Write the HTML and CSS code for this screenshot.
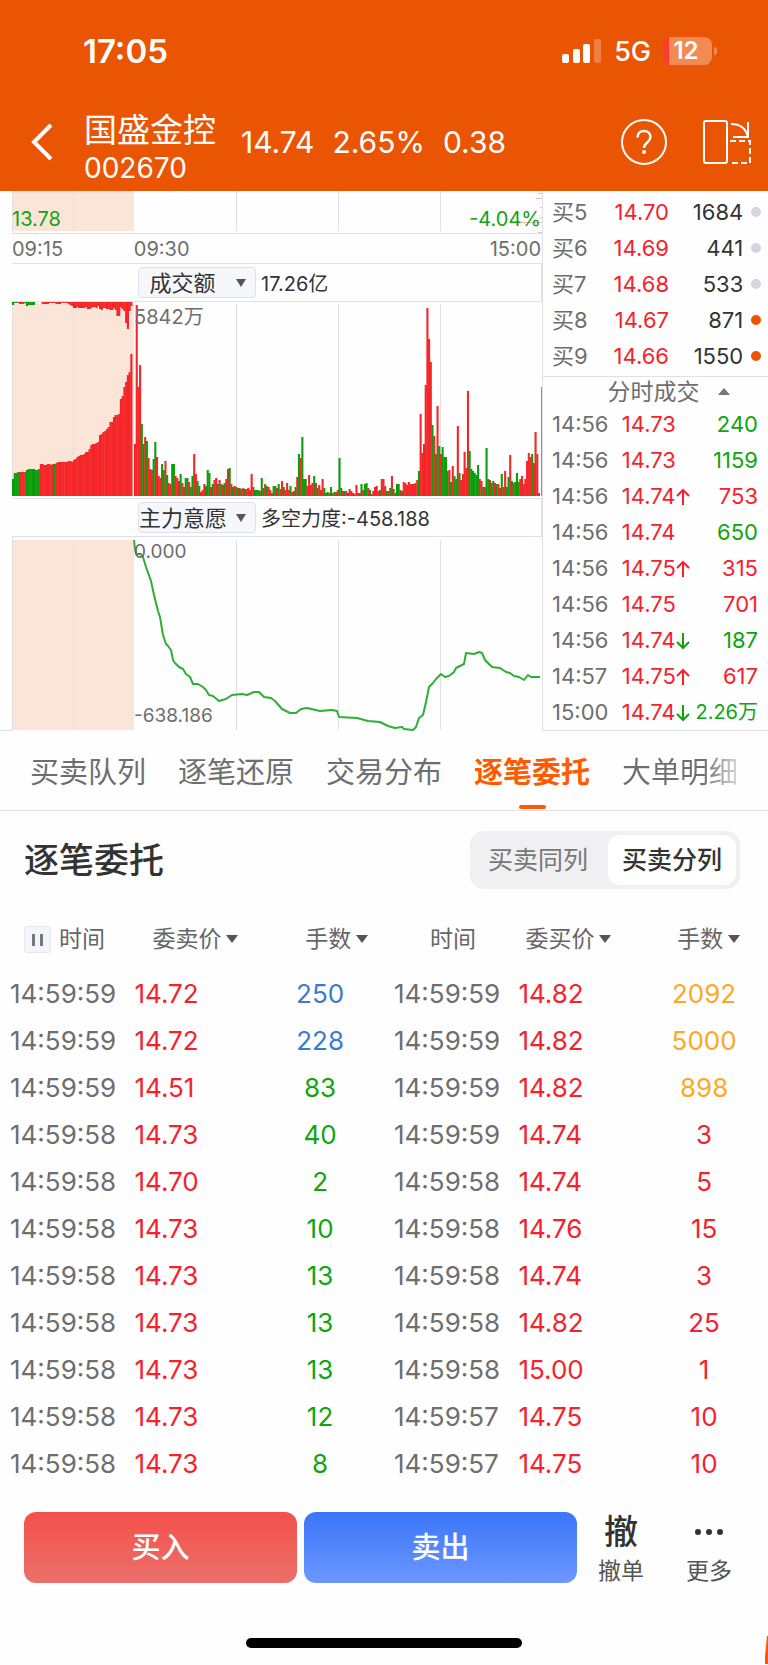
FILE: index.html
```html
<!DOCTYPE html>
<html lang="zh-CN">
<head>
    <meta charset="UTF-8">
    <meta name="viewport" content="width=device-width, initial-scale=1.0">
    <title>国盛金控 002670</title>
    <link rel="stylesheet" href="styles.css">
</head>
<body>
    <header class="top">
        <div class="status-bar">
            <span class="clock">17:05</span>
            <div class="status-icons">
                <svg width="40" height="26" viewBox="0 0 40 26" fill="#fff">
                    <rect x="0" y="16" width="7" height="9" rx="2"/>
                    <rect x="11" y="11" width="7" height="14" rx="2"/>
                    <rect x="21" y="6" width="7" height="19" rx="2"/>
                    <rect x="32" y="1" width="7" height="24" rx="2" opacity="0.25"/>
                </svg>
                <span class="network">5G</span>
                <span class="battery">12</span>
            </div>
        </div>
        <div class="stock-bar">
            <a href="#" class="back" aria-label="返回">
                <svg width="24" height="40" viewBox="0 0 24 40" fill="none" stroke="#fff" stroke-width="4">
                    <path d="M21 3 4 20l17 17"/>
                </svg>
            </a>
            <div class="stock-name">
                <h1>国盛金控</h1>
                <p>002670</p>
            </div>
            <div class="quote">
                <span>14.74</span>
                <span>2.65%</span>
                <span>0.38</span>
            </div>
            <div class="stock-actions">
                <button type="button" aria-label="帮助">
                    <svg width="46" height="46" viewBox="0 0 46 46" fill="none" stroke="#fff" stroke-width="2">
                        <circle cx="23" cy="23" r="22"/>
                        <path d="M16.500 18.500c0-4 2.800-6.500 6.500-6.500s6.500 2.500 6.500 6c0 5-6.500 5.500-6.500 11" stroke-width="2.500"/>
                        <circle cx="23" cy="33" r="2" fill="#fff" stroke="none"/>
                    </svg>
                </button>
                <button type="button" aria-label="横屏">
                    <svg width="50" height="46" viewBox="0 0 50 46" fill="none" stroke="#fff" stroke-width="2">
                        <rect x="2" y="2" width="23" height="42" rx="2"/>
                        <path d="M28 22h20v22H28" stroke-dasharray="6 3"/>
                        <path d="M29 5c9 0 15 5 17 13M46 3v15H31"/>
                    </svg>
                </button>
            </div>
        </div>
    </header>

    <main>
        <section class="market">
            <div class="charts">
                <div class="chart price-chart">
                    <svg viewBox="0 0 542 42" preserveAspectRatio="none">
                        <rect x="12" y="0" width="122" height="40" class="auction"/>
                        <path class="grid-line" d="M12.500 0v42M73.500 0v40M236.500 0v40M338.500 0v40M440.500 0v40"/>
                        <path class="chip-line" d="M538 2.500h4M536 7.500h6M540 16.500h2M540 26.500h2M518 31.500h24M538 41.500h4"/>
                    </svg>
                    <span class="label low">13.78</span>
                    <span class="label change">-4.04%</span>
                </div>
                <div class="times">
                    <span>09:15</span>
                    <span>09:30</span>
                    <span>15:00</span>
                </div>
                <div class="toolbar">
                    <label class="picker">
                        <select aria-label="指标一"><option>成交额</option></select>
                    </label>
                    <span>17.26亿</span>
                </div>
                <div class="chart volume-chart">
                    <svg id="volume" viewBox="0 0 542 196" preserveAspectRatio="none">
                        <rect x="12" y="2" width="122" height="192" class="auction"/>
                        <path class="grid-line" d="M12.500 0v194M73.500 2v192M236.500 2v192M338.500 2v192M440.500 2v192"/>
                    </svg>
                    <span class="label peak">5842万</span>
                </div>
                <div class="toolbar">
                    <label class="picker">
                        <select aria-label="指标二"><option>主力意愿</option></select>
                    </label>
                    <span>多空力度:-458.188</span>
                </div>
                <div class="chart force-chart">
                    <svg viewBox="0 537 542 194" preserveAspectRatio="none">
                        <rect x="12" y="540" width="122" height="190" class="auction"/>
                        <path class="grid-line" d="M12.500 537v194M73.500 540v190M236.500 540v190M338.500 540v190M440.500 540v190M0 730.500h12"/>
                        <polyline class="force-line" points="134,540 135,549 136,554 141,554 143,557 146,567 151,581 154,595 158,611 160,617 163,635 166,644 168,646 171,650 173,660 175,663 179,667 183,669 186,674 190,677 193,684 198,684 203,687 206,690 209,695 213,696 219,701 226,699 232,695 242,694 247,695 254,692 259,692 264,697 271,698 275,701 282,709 290,713 296,713 301,709 307,708 320,711 332,710 337,711 339,717 357,718 368,721 380,722 388,726 395,728 402,727 404,729 413,730 416,727 419,718 423,715 426,702 429,687 433,683 436,679 441,674 445,677 449,676 454,672 456,668 464,664 466,653 474,654 479,652 482,653 485,660 492,667 500,668 506,672 510,673 514,676 519,677 524,680 528,675 531,677 540,677"/>
                    </svg>
                    <span class="label force-max">0.000</span>
                    <span class="label force-min">-638.186</span>
                </div>
            </div>

            <div class="depth">
                <table class="bids">
                    <tbody>
                        <tr><th>买5</th><td class="up">14.70</td><td>1684</td><td><i class="dot"></i></td></tr>
                        <tr><th>买6</th><td class="up">14.69</td><td>441</td><td><i class="dot"></i></td></tr>
                        <tr><th>买7</th><td class="up">14.68</td><td>533</td><td><i class="dot"></i></td></tr>
                        <tr><th>买8</th><td class="up">14.67</td><td>871</td><td><i class="dot active"></i></td></tr>
                        <tr><th>买9</th><td class="up">14.66</td><td>1550</td><td><i class="dot active"></i></td></tr>
                    </tbody>
                </table>
                <button type="button" class="ticks-title">分时成交 <i class="caret-up"></i></button>
                <table class="ticks">
                    <tbody>
                        <tr><td>14:56</td><td class="up">14.73</td><td class="down">240</td></tr>
                        <tr><td>14:56</td><td class="up">14.73</td><td class="down">1159</td></tr>
                        <tr><td>14:56</td><td class="up">14.74<svg class="arrow"><use href="#arrow-up"/></svg></td><td class="up">753</td></tr>
                        <tr><td>14:56</td><td class="up">14.74</td><td class="down">650</td></tr>
                        <tr><td>14:56</td><td class="up">14.75<svg class="arrow"><use href="#arrow-up"/></svg></td><td class="up">315</td></tr>
                        <tr><td>14:56</td><td class="up">14.75</td><td class="up">701</td></tr>
                        <tr><td>14:56</td><td class="up">14.74<svg class="arrow down"><use href="#arrow-down"/></svg></td><td class="down">187</td></tr>
                        <tr><td>14:57</td><td class="up">14.75<svg class="arrow"><use href="#arrow-up"/></svg></td><td class="up">617</td></tr>
                        <tr><td>15:00</td><td class="up">14.74<svg class="arrow down"><use href="#arrow-down"/></svg></td><td class="down total">2.26万</td></tr>
                    </tbody>
                </table>
            </div>
        </section>

        <nav class="tabs">
            <a href="#">买卖队列</a>
            <a href="#">逐笔还原</a>
            <a href="#">交易分布</a>
            <a href="#" class="active">逐笔委托</a>
            <a href="#">大单明细</a>
        </nav>

        <section class="orders">
            <div class="orders-head">
                <h2>逐笔委托</h2>
                <div class="segment">
                    <button type="button">买卖同列</button>
                    <button type="button" class="active">买卖分列</button>
                </div>
            </div>
            <table class="orders-table">
                <thead>
                    <tr>
                        <th><button type="button" class="pause" aria-label="暂停"></button>时间</th>
                        <th><button type="button" class="sort">委卖价</button></th>
                        <th><button type="button" class="sort">手数</button></th>
                        <th>时间</th>
                        <th><button type="button" class="sort">委买价</button></th>
                        <th><button type="button" class="sort">手数</button></th>
                    </tr>
                </thead>
                <tbody>
                    <tr><td>14:59:59</td><td>14.72</td><td class="big">250</td><td>14:59:59</td><td>14.82</td><td class="huge">2092</td></tr>
                    <tr><td>14:59:59</td><td>14.72</td><td class="big">228</td><td>14:59:59</td><td>14.82</td><td class="huge">5000</td></tr>
                    <tr><td>14:59:59</td><td>14.51</td><td class="down">83</td><td>14:59:59</td><td>14.82</td><td class="huge">898</td></tr>
                    <tr><td>14:59:58</td><td>14.73</td><td class="down">40</td><td>14:59:59</td><td>14.74</td><td class="up">3</td></tr>
                    <tr><td>14:59:58</td><td>14.70</td><td class="down">2</td><td>14:59:58</td><td>14.74</td><td class="up">5</td></tr>
                    <tr><td>14:59:58</td><td>14.73</td><td class="down">10</td><td>14:59:58</td><td>14.76</td><td class="up">15</td></tr>
                    <tr><td>14:59:58</td><td>14.73</td><td class="down">13</td><td>14:59:58</td><td>14.74</td><td class="up">3</td></tr>
                    <tr><td>14:59:58</td><td>14.73</td><td class="down">13</td><td>14:59:58</td><td>14.82</td><td class="up">25</td></tr>
                    <tr><td>14:59:58</td><td>14.73</td><td class="down">13</td><td>14:59:58</td><td>15.00</td><td class="up">1</td></tr>
                    <tr><td>14:59:58</td><td>14.73</td><td class="down">12</td><td>14:59:57</td><td>14.75</td><td class="up">10</td></tr>
                    <tr><td>14:59:58</td><td>14.73</td><td class="down">8</td><td>14:59:57</td><td>14.75</td><td class="up">10</td></tr>
                </tbody>
            </table>
        </section>
    </main>

    <footer class="trade-bar">
        <button type="button" class="trade buy">买入</button>
        <button type="button" class="trade sell">卖出</button>
        <div class="tools">
            <button type="button" class="tool"><b>撤</b><span>撤单</span></button>
            <button type="button" class="tool">
                <svg width="30" height="40" viewBox="0 0 30 40" fill="#333">
                    <circle cx="4" cy="20" r="3"/><circle cx="15" cy="20" r="3"/><circle cx="26" cy="20" r="3"/>
                </svg>
                <span>更多</span>
            </button>
        </div>
    </footer>
    <div class="home-indicator"></div>
    <svg class="corner" width="4" height="28" viewBox="0 0 4 28"><path d="M3 0h1v28H1V20z" fill="#ff5500"/></svg>

    <svg class="sprite">
        <symbol id="arrow-up" viewBox="0 0 14 18"><path d="M7 17V2M1 8l6-6 6 6" fill="none" stroke="currentColor" stroke-width="2"/></symbol>
        <symbol id="arrow-down" viewBox="0 0 14 18"><path d="M7 1v15M1 10l6 6 6-6" fill="none" stroke="currentColor" stroke-width="2"/></symbol>
    </svg>

    <script src="volume.js"></script>
</body>
</html>
```

FILE: styles.css
```css
:root {
    --orange: #ea5504;
    --accent: #ff5a00;
    --red: #f5222d;
    --green: #0fa50f;
    --blue: #3a7bd0;
    --yellow: #ffa726;
    --text: #333333;
    --gray: #6e6e6e;
    --line: #dfe0e8;
    --auction: #fbe5d8;
}

* {
    margin: 0;
    padding: 0;
    box-sizing: border-box;
}

body {
    position: relative;
    font-family: Inter, "Noto Sans CJK SC", sans-serif;
    color: var(--text);
    background: #fefefe;
}

button, select {
    font: inherit;
    color: inherit;
    background: none;
    border: none;
}

a {
    color: inherit;
    text-decoration: none;
}

svg {
    display: block;
}

table {
    width: 100%;
    border-collapse: collapse;
    table-layout: fixed;
}

th {
    font-weight: 400;
    text-align: left;
}

.up {
    color: var(--red);
}

.down {
    color: var(--green);
}

/* header */
.top {
    background: var(--orange);
    color: #fff;
}

.status-bar {
    height: 96px;
    padding: 6px 56px 0 83px;
    display: flex;
    align-items: center;
    justify-content: space-between;
}

.clock {
    font-size: 33px;
    font-weight: 600;
}

.status-icons {
    display: flex;
    align-items: center;
    gap: 12px;
}

.network {
    font-size: 27px;
    font-weight: 500;
}

.battery {
    position: relative;
    width: 49px;
    height: 28px;
    padding-right: 3px;
    border-radius: 8px;
    background: linear-gradient(to right, #ff3b30 6px, #f28a54 6px);
    font-size: 24px;
    font-weight: 600;
    line-height: 28px;
    text-align: center;
}

.battery::after {
    content: "";
    position: absolute;
    right: -5px;
    top: 10px;
    width: 3px;
    height: 8px;
    border-radius: 0 4px 4px 0;
    background: #f28a54;
}

.stock-bar {
    height: 95px;
    padding: 0 16px 4px 30px;
    display: flex;
    align-items: center;
}

.stock-name {
    margin-left: 30px;
    padding-top: 14px;
}

.stock-name h1 {
    font-size: 33px;
    font-weight: 400;
    line-height: 38px;
}

.stock-name p {
    font-size: 28px;
    line-height: 38px;
}

.quote {
    display: flex;
    gap: 18px;
    margin-left: 25px;
    font-size: 30px;
}

.stock-actions {
    display: flex;
    gap: 35px;
    margin-left: auto;
}

/* charts */
.market {
    display: grid;
    grid-template-columns: 542fr 226fr;
}

.charts {
    font-size: 20px;
}

.chart {
    position: relative;
}

.chart > svg {
    width: 100%;
}

.price-chart > svg {
    height: 42px;
}

.volume-chart > svg {
    height: 196px;
}

.force-chart > svg {
    height: 194px;
}

.auction {
    fill: var(--auction);
}

.grid-line {
    fill: none;
    stroke: var(--line);
}

.chip-line {
    stroke: #f9b4b8;
}

.force-line {
    fill: none;
    stroke: #2eae34;
    stroke-width: 2;
    stroke-linejoin: round;
}

.bar-up {
    fill: #f52528;
}

.bar-down {
    fill: #0a9f0a;
}

.label {
    position: absolute;
    left: 134px;
    line-height: 24px;
    color: var(--gray);
}

.low {
    left: 12px;
    bottom: 2px;
    color: var(--green);
}

.change {
    left: auto;
    right: 1px;
    bottom: 2px;
    color: var(--green);
}

.peak, .force-max {
    top: 3px;
}

.force-max, .force-min {
    font-size: 19px;
}

.force-min {
    bottom: 3px;
}

.times {
    display: grid;
    grid-template-columns: 122fr 204fr 204fr;
    height: 30px;
    margin-left: 12px;
    padding-right: 1px;
    border-top: 1px solid var(--line);
    line-height: 30px;
    color: var(--gray);
}

.times span:last-child {
    text-align: right;
}

.toolbar {
    height: 39px;
    margin-left: 12px;
    padding-left: 126px;
    display: flex;
    align-items: center;
    gap: 5px;
    border: 1px solid var(--line);
    border-left: none;
}

.picker {
    position: relative;
}

.picker select {
    appearance: none;
    width: 118px;
    height: 31px;
    padding-right: 29px;
    border: 1px solid var(--line);
    border-radius: 4px;
    background: #f6f7fa;
    font-size: 22px;
    line-height: 28px;
    text-align: center;
    text-align-last: center;
}

.picker::after, .sort::after {
    content: "";
    border: 6px solid transparent;
    border-top: 8px solid #555;
    border-bottom: none;
}

.picker::after {
    position: absolute;
    right: 10px;
    top: 12px;
    border-width: 8px 5px 0;
}

/* order book */
.depth {
    border-left: 1px solid var(--line);
    border-bottom: 1px solid var(--line);
    font-size: 22px;
    line-height: 24px;
}

.bids {
    margin: 3px 0 2px;
}

.bids tr {
    height: 36px;
}

.bids th {
    width: 24%;
    padding-left: 9px;
    color: var(--gray);
}

.bids td {
    text-align: right;
}

.bids td:nth-child(3) {
    width: 33%;
}

.bids td:nth-child(4) {
    width: 11%;
}

.dot {
    display: block;
    width: 10px;
    height: 10px;
    margin-left: 8px;
    border-radius: 50%;
    background: #d4d6df;
}

.dot.active {
    background: var(--orange);
}

.ticks-title {
    display: flex;
    align-items: center;
    justify-content: center;
    gap: 18px;
    width: 100%;
    height: 30px;
    padding-left: 26px;
    border-top: 1px solid var(--line);
    font-size: 23px;
    color: var(--gray);
}

.caret-up {
    border: 6px solid transparent;
    border-bottom: 7px solid #777;
    border-top: none;
}

.ticks tr {
    height: 36px;
}

.ticks td {
    white-space: nowrap;
}

.ticks td:nth-child(1) {
    width: 35%;
    padding-left: 9px;
    color: var(--gray);
}

.ticks td:nth-child(2) {
    width: 31%;
}

.ticks td:nth-child(3) {
    padding-right: 10px;
    text-align: right;
}

.ticks .total {
    font-size: 20px;
}

.arrow {
    display: inline-block;
    width: 14px;
    height: 18px;
    vertical-align: -2px;
}

/* tabs */
.tabs {
    display: flex;
    justify-content: space-between;
    height: 80px;
    padding: 0 30px;
    border-bottom: 1px solid var(--line);
    font-size: 29px;
    line-height: 84px;
    color: var(--gray);
}

.tabs .active {
    position: relative;
    color: var(--accent);
    font-weight: 700;
}

.tabs .active::after {
    content: "";
    position: absolute;
    left: 45px;
    top: 74px;
    width: 27px;
    height: 4px;
    border-radius: 2px;
    background: var(--accent);
}

.tabs a:last-child {
    color: transparent;
    background: linear-gradient(to right, var(--gray) 70%, #d8d8d8);
    background-clip: text;
}

/* orders */
.orders-head {
    display: flex;
    align-items: center;
    justify-content: space-between;
    padding: 20px 28px 20px 24px;
}

.orders-head h2 {
    font-size: 35px;
    font-weight: 500;
    line-height: 58px;
}

.segment {
    display: flex;
    height: 58px;
    padding: 4px;
    border-radius: 14px;
    background: #f0f0f3;
    font-size: 25px;
    color: #777;
}

.segment button {
    padding: 0 14px;
    border-radius: 12px;
    line-height: 50px;
}

.segment button:first-child {
    padding-right: 20px;
}

.segment .active {
    background: #fff;
    color: var(--text);
    font-weight: 500;
}

.orders-table {
    font-size: 26px;
    line-height: 32px;
}

.orders-table thead tr {
    height: 61px;
    font-size: 23px;
    color: #666;
}

.orders-table th {
    padding-bottom: 2px;
}

.orders-table th:nth-child(1) {
    width: 17.5%;
    padding-left: 24px;
}

.orders-table th:nth-child(2) {
    padding-left: 18px;
}

.orders-table th:nth-child(3) {
    padding-left: 46px;
}

.orders-table th:nth-child(4) {
    width: 17.5%;
    padding-left: 46px;
}

.orders-table th:nth-child(5) {
    padding-left: 7px;
}

.orders-table th:nth-child(6) {
    padding-left: 34px;
}

.sort {
    display: flex;
    align-items: center;
    gap: 5px;
}

.pause {
    display: inline-block;
    width: 27px;
    height: 27px;
    margin-right: 8px;
    border: 1px solid #e4e6f0;
    border-radius: 3px;
    background:
        linear-gradient(#777, #777) 7px 7px / 3px 12px no-repeat,
        linear-gradient(#777, #777) 15px 7px / 3px 12px no-repeat,
        #f4f5fa;
    vertical-align: -5px;
}

.orders-table tbody tr {
    height: 47px;
}

.orders-table td:nth-child(3n + 1) {
    padding-left: 10px;
    color: var(--gray);
}

.orders-table td:nth-child(3n + 2) {
    color: var(--red);
}

.orders-table td:nth-child(3n) {
    padding-right: 3px;
    text-align: center;
}

.big {
    color: var(--blue);
}

.huge {
    color: var(--yellow);
}

/* bottom bar */
.trade-bar {
    display: flex;
    gap: 7px;
    padding: 25px 15px 0 24px;
}

.trade {
    flex: 1;
    height: 71px;
    border-radius: 12px;
    color: #fff;
    font-size: 29px;
    font-weight: 500;
    line-height: 40px;
}

.buy {
    background: linear-gradient(#f4504a, #eb706a);
}

.sell {
    background: linear-gradient(#3a76f8, #6c97ff);
}

.tools {
    display: flex;
    margin-left: -7px;
}

.tool {
    display: flex;
    flex-direction: column;
    align-items: center;
    width: 88px;
    font-size: 23px;
    line-height: 38px;
    color: #555;
}

.tool b {
    font-size: 34px;
    font-weight: 500;
    line-height: 40px;
    color: var(--text);
}

.home-indicator {
    width: 36%;
    height: 10px;
    margin: 48px auto 0;
    border-radius: 5px;
    background: #000;
}

.corner {
    margin: -12px 0 0 auto;
}

.sprite {
    position: absolute;
    width: 0;
    height: 0;
}
```

FILE: volume.js
```js
// bar heights, a trailing "g" marks a falling bar
const auction = '17g 23g 23g 24g 24 24 24 24 26g 27g 27g 27g 27g 26g 26g 27g 32 32 31 31 32 32 31 32 32g 33 34 34 34 34 34 34 35 35 34 36 37 39 40 41 41 42 44 44 47 51 52 52 53 54 61 62 64 65 67 69 74 74 79 81 81 82 97 100 109 114 121 124 142';

const unmatched = '3g 1g 1g 1 2 2 2 1g 4g 3g 3g 3g 3g 0 0 0 0 2 2 2 2 1 1 1 1 2 2 2 1 1 1 1 2 3 4 6 6 5 6 6 6 6 5 7 7 6 5 5 6 4 7 8 6 6 7 7 8 8 6 8 14 14 5 7 9 21 27 9 4';

const trading = '52 191 109 131 72g 52g 59 55g 38 27 26 37g 54g 39 20 18 32g 26g 35 21g 13 12 32g 32g 20 18 15 22g 13 9 18g 18g 14 9g 20g 42 22 15g 10g 4 6 12 10g 26g 23g 9 12g 16 18 12g 16 12g 11 13g 17 27 28g 12 9g 10 9g 8 8g 7 8 7g 7 8 6 22 9 6g 6g 6g 5 18g 8g 12 10g 9 '
    + '6 3 10g 10g 8 12g 7 15 9g 6 13 6 10g 4 5 9g 19 42g 38 59g 17g 17g 10 21 11 13 20g 13 8g 11 6 17 8g 3g 4g 3 9g 3 4g 4 6 38g 8g 5 5g 5 3 7 5 3 2 11 3 3 12g 6 12g 13g 8 6g 2 5 9 10 5 6g 17 17 10 5g 5 8g 20 7g 3 12g 12g 6 5g 14 13 11 14 12 12 12 13 16 '
    + '25g 82 43 52 111 188 157 134 71g 60 42g 90 50g 42 49g 39g 39g 25g 26 14g 30 20g 17g 70 23g 16 22 44 28 105 45g 27g 25g 23g 21g 31g 17 15 9g 9 48g 17g 16 13g 15g 13 12g 12 8 22g 9 25 9g 19g 41 15g 13 14g 23g 14g 17 20 12 17 35 43 39 42g 33 64 42 3 0 109g';

const svg = document.getElementById('volume');

function drawBars(data, startX, step, fromTop) {
    data.split(' ').forEach((item, i) => {
        const height = parseInt(item, 10);
        const rect = document.createElementNS('http://www.w3.org/2000/svg', 'rect');
        rect.setAttribute('x', startX + i * step);
        rect.setAttribute('y', fromTop ? 0 : 194 - height);
        // slight overlap so neighbouring bars leave no seam
        rect.setAttribute('width', step + 0.4);
        rect.setAttribute('height', height);
        rect.setAttribute('class', item.endsWith('g') ? 'bar-down' : 'bar-up');
        svg.appendChild(rect);
    });
}

drawBars(auction, 12, 1.74, false);
drawBars(unmatched, 12, 1.74, true);
drawBars(trading, 134, 1.69, false);
```
